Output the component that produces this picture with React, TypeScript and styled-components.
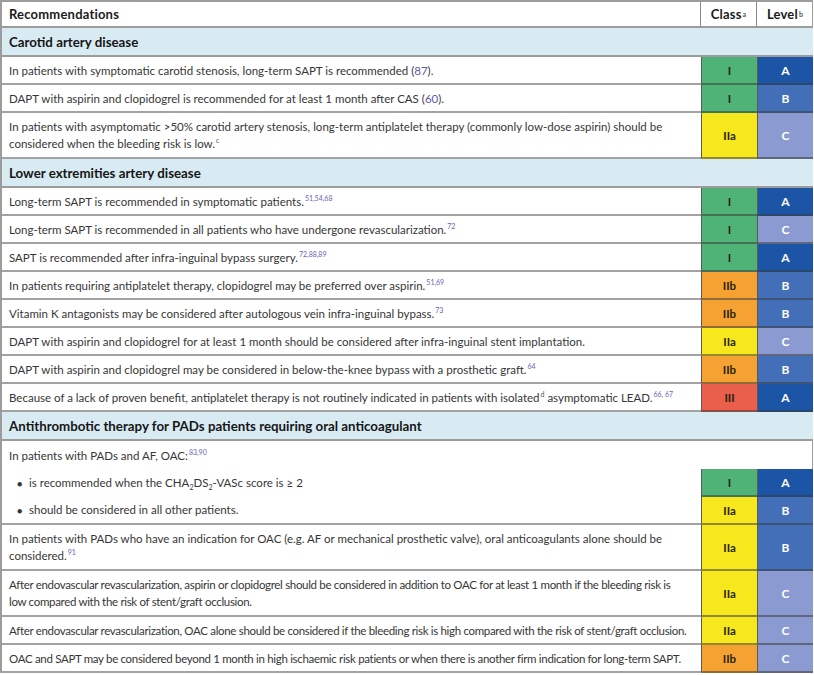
import React from "react";
import styled, { createGlobalStyle } from "styled-components";

const Global = createGlobalStyle`
  html, body { margin: 0; padding: 0; background: #ffffff; }
  body { font-family: Lato, "Open Sans", "DejaVu Sans", sans-serif; }
`;

const CLASS_BG: Record<string, string> = {
  I: "#4fb276",
  IIa: "#f6e81c",
  IIb: "#f5a233",
  III: "#ea5f4b",
};
const LEVEL_BG: Record<string, string> = {
  A: "#1c55a5",
  B: "#436fb8",
  C: "#8b9bd1",
};

const Table = styled.div`
  display: grid;
  grid-template-columns: 699px 56px 56px;
  width: 813px;
  box-sizing: border-box;
  border-left: 2px solid #9c9c9c;
  border-top: 2px solid #9c9c9c;
  border-right: 1px solid #9c9c9c;
  color: #363636;
`;

const HeadCell = styled.div<{ $center?: boolean; $last?: boolean }>`
  height: 26px;
  box-sizing: border-box;
  border-bottom: 2px solid #9c9c9c;
  border-right: ${(p) => (p.$last ? "none" : "1px solid #8a8a8a")};
  display: flex;
  align-items: center;
  justify-content: ${(p) => (p.$center ? "center" : "flex-start")};
  padding: 0 7px;
  font-weight: 700;
  font-size: 13px;
  letter-spacing: 0.2px;
  color: #1c1c1c;
`;

const SectionCell = styled.div`
  grid-column: 1 / -1;
  height: 29px;
  box-sizing: border-box;
  background: #d9ebf2;
  border-bottom: 2px solid #9c9c9c;
  display: flex;
  align-items: center;
  padding: 0 7px;
  font-weight: 700;
  font-size: 13.3px;
  color: #161616;
`;

const TextCell = styled.div<{ $lines?: number; $noBorder?: boolean; $indent?: boolean; $tight?: boolean }>`
  box-sizing: border-box;
  min-height: ${(p) => ((p.$lines ?? 1) === 2 ? 46 : 28)}px;
  padding: 4px 8px 4px ${(p) => (p.$indent ? 15 : 7)}px;
  border-bottom: ${(p) => (p.$noBorder ? "none" : "2px solid #a3a3a3")};
  display: flex;
  align-items: center;
  font-size: 11.5px;
  line-height: 17px;
  white-space: nowrap;
  letter-spacing: ${(p) => (p.$tight ? "-0.32px" : "0")};
`;

const Bullet = styled.span`
  display: inline-block;
  width: 12px;
  font-size: 9px;
`;

const ClassCell = styled.div<{ $bg: string }>`
  box-sizing: border-box;
  background: ${(p) => p.$bg};
  border-left: 1px solid #5a5a5a;
  border-bottom: 2px solid rgba(60, 60, 60, 0.55);
  display: flex;
  align-items: center;
  justify-content: center;
  font-weight: 700;
  font-size: 11.5px;
  color: #2a2410;
`;

const LevelCell = styled(ClassCell)`
  color: #ffffff;
  font-size: 12px;
`;

const BlankCell = styled.div<{ $noBorder?: boolean }>`
  box-sizing: border-box;
  border-bottom: ${(p) => (p.$noBorder ? "none" : "2px solid #a3a3a3")};
`;

const Ref = styled.sup`
  font-size: 7px;
  line-height: 0;
  color: #6b63b7;
  margin-left: 1px;
`;

const Note = styled.sup`
  font-size: 7px;
  line-height: 0;
  color: #555;
  margin-left: 1px;
`;

const Link = styled.span`
  color: #5b58b0;
`;

const Sub = styled.sub`
  font-size: 7px;
  line-height: 0;
`;

type Rec = {
  text: React.ReactNode;
  cls: string;
  level: string;
  lines?: number;
  tight?: boolean;
};

const RecRow: React.FC<Rec> = ({ text, cls, level, lines, tight }) => (
  <>
    <TextCell $lines={lines} $tight={tight}>
      <span>{text}</span>
    </TextCell>
    <ClassCell $bg={CLASS_BG[cls]}>{cls}</ClassCell>
    <LevelCell $bg={LEVEL_BG[level]}>{level}</LevelCell>
  </>
);

const carotid: Rec[] = [
  {
    text: (
      <>
        In patients with symptomatic carotid stenosis, long-term SAPT is recommended (<Link>87</Link>).
      </>
    ),
    cls: "I",
    level: "A",
  },
  {
    text: (
      <>
        DAPT with aspirin and clopidogrel is recommended for at least 1 month after CAS (<Link>60</Link>).
      </>
    ),
    cls: "I",
    level: "B",
  },
  {
    text: (
      <>
        In patients with asymptomatic &gt;50% carotid artery stenosis, long-term antiplatelet therapy (commonly low-dose aspirin) should be
        <br />
        considered when the bleeding risk is low.<Note>c</Note>
      </>
    ),
    cls: "IIa",
    level: "C",
    lines: 2,
  },
];

const lead: Rec[] = [
  { text: <>Long-term SAPT is recommended in symptomatic patients.<Ref>51,54,68</Ref></>, cls: "I", level: "A" },
  { text: <>Long-term SAPT is recommended in all patients who have undergone revascularization.<Ref>72</Ref></>, cls: "I", level: "C" },
  { text: <>SAPT is recommended after infra-inguinal bypass surgery.<Ref>72,88,89</Ref></>, cls: "I", level: "A" },
  { text: <>In patients requiring antiplatelet therapy, clopidogrel may be preferred over aspirin.<Ref>51,69</Ref></>, cls: "IIb", level: "B" },
  { text: <>Vitamin K antagonists may be considered after autologous vein infra-inguinal bypass.<Ref>73</Ref></>, cls: "IIb", level: "B" },
  { text: <>DAPT with aspirin and clopidogrel for at least 1 month should be considered after infra-inguinal stent implantation.</>, cls: "IIa", level: "C" },
  { text: <>DAPT with aspirin and clopidogrel may be considered in below-the-knee bypass with a prosthetic graft.<Ref>64</Ref></>, cls: "IIb", level: "B" },
  {
    text: (
      <>
        Because of a lack of proven benefit, antiplatelet therapy is not routinely indicated in patients with isolated<Note>d</Note> asymptomatic LEAD.<Ref>66, 67</Ref>
      </>
    ),
    cls: "III",
    level: "A",
  },
];

const oac: Rec[] = [
  {
    text: (
      <>
        In patients with PADs who have an indication for OAC (e.g. AF or mechanical prosthetic valve), oral anticoagulants alone should be
        <br />
        considered.<Ref>91</Ref>
      </>
    ),
    cls: "IIa",
    level: "B",
    lines: 2,
  },
  {
    text: (
      <>
        After endovascular revascularization, aspirin or clopidogrel should be considered in addition to OAC for at least 1 month if the bleeding risk is
        <br />
        low compared with the risk of stent/graft occlusion.
      </>
    ),
    cls: "IIa",
    level: "C",
    lines: 2,
    tight: true,
  },
  {
    text: <>After endovascular revascularization, OAC alone should be considered if the bleeding risk is high compared with the risk of stent/graft occlusion.</>,
    cls: "IIa",
    level: "C",
    tight: true,
  },
  {
    text: <>OAC and SAPT may be considered beyond 1 month in high ischaemic risk patients or when there is another firm indication for long-term SAPT.</>,
    cls: "IIb",
    level: "C",
    tight: true,
  },
];

export default function App() {
  return (
    <>
      <Global />
      <Table>
        <HeadCell>Recommendations</HeadCell>
        <HeadCell $center>
          Class<Note>a</Note>
        </HeadCell>
        <HeadCell $center $last>
          Level<Note>b</Note>
        </HeadCell>

        <SectionCell>Carotid artery disease</SectionCell>
        {carotid.map((r, i) => (
          <RecRow key={`c${i}`} {...r} />
        ))}

        <SectionCell>Lower extremities artery disease</SectionCell>
        {lead.map((r, i) => (
          <RecRow key={`l${i}`} {...r} />
        ))}

        <SectionCell>Antithrombotic therapy for PADs patients requiring oral anticoagulant</SectionCell>
        <TextCell $noBorder>
          <span>
            In patients with PADs and AF, OAC:<Ref>83,90</Ref>
          </span>
        </TextCell>
        <BlankCell $noBorder />
        <BlankCell $noBorder />
        <TextCell $noBorder $indent>
          <span>
            <Bullet>●</Bullet>is recommended when the CHA<Sub>2</Sub>DS<Sub>2</Sub>-VASc score is ≥ 2
          </span>
        </TextCell>
        <ClassCell $bg={CLASS_BG.I}>I</ClassCell>
        <LevelCell $bg={LEVEL_BG.A}>A</LevelCell>
        <TextCell $indent>
          <span>
            <Bullet>●</Bullet>should be considered in all other patients.
          </span>
        </TextCell>
        <ClassCell $bg={CLASS_BG.IIa}>IIa</ClassCell>
        <LevelCell $bg={LEVEL_BG.B}>B</LevelCell>

        {oac.map((r, i) => (
          <RecRow key={`o${i}`} {...r} />
        ))}
      </Table>
    </>
  );
}
